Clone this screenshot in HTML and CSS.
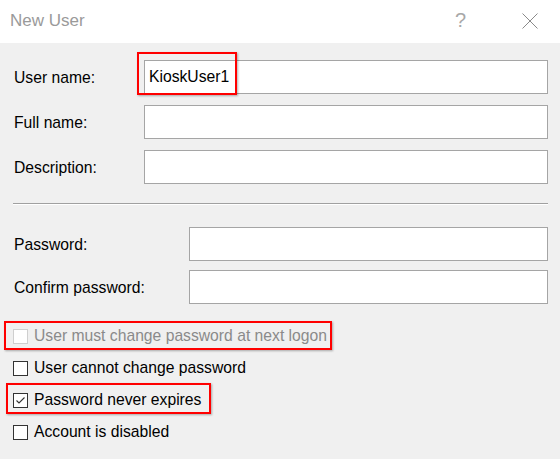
FILE: index.html
```html
<!DOCTYPE html>
<html lang="en">
<head>
<meta charset="utf-8">
<title>New User</title>
<link rel="stylesheet" href="styles.css">
</head>
<body>
<div class="dialog">
  <div class="titlebar">
    <span class="title">New User</span>
    <div class="title-buttons">
      <span class="help">?</span>
      <svg class="close" width="16" height="16" viewBox="0 0 16 16" aria-hidden="true">
        <path d="M0.5 0.5 L15.5 15.5 M15.5 0.5 L0.5 15.5" stroke="#8a8a8a" stroke-width="1" fill="none"/>
      </svg>
    </div>
  </div>
  <div class="content">
    <div class="grid grid-top">
      <label class="lbl">User name:</label>
      <div class="field hl-field"><div class="input">KioskUser1</div></div>
      <label class="lbl">Full name:</label>
      <div class="field"><div class="input"></div></div>
      <label class="lbl">Description:</label>
      <div class="field"><div class="input"></div></div>
    </div>
    <div class="separator"></div>
    <div class="grid grid-pw">
      <label class="lbl">Password:</label>
      <div class="field"><div class="input"></div></div>
      <label class="lbl">Confirm password:</label>
      <div class="field"><div class="input"></div></div>
    </div>
    <div class="checks">
      <div class="check disabled hl-a">
        <span class="box"></span><span class="ctext">User must change password at next logon</span>
      </div>
      <div class="check">
        <span class="box"></span><span class="ctext">User cannot change password</span>
      </div>
      <div class="check hl-b">
        <span class="box"><svg width="13" height="13" viewBox="0 0 13 13" aria-hidden="true"><path d="M2.5 6.5 L5 9 L10.5 3.5" stroke="#333" stroke-width="1.1" fill="none"/></svg></span><span class="ctext">Password never expires</span>
      </div>
      <div class="check">
        <span class="box"></span><span class="ctext">Account is disabled</span>
      </div>
    </div>
  </div>
</div>
</body>
</html>
```
FILE: styles.css
```css
html, body {
  margin: 0;
  padding: 0;
}
body {
  width: 560px;
  height: 459px;
  overflow: hidden;
  background: #f0f0f0;
  font-family: "Liberation Sans", Arial, sans-serif;
  font-size: 15.7px;
  color: #000;
}
.dialog {
  width: 560px;
  height: 459px;
  background: #f0f0f0;
}
.titlebar {
  height: 43px;
  background: #fff;
  display: flex;
  align-items: center;
  justify-content: space-between;
  padding-left: 10px;
  box-sizing: border-box;
}
.title {
  font-size: 17px;
  color: #9a9a9a;
  margin-top: -1px;
}
.title-buttons {
  display: flex;
  align-items: center;
  margin-top: -2px;
}
.help {
  font-size: 20px;
  color: #a8a8a8;
  width: 9px;
  margin-right: 58px;
}
.close {
  display: block;
  margin-right: 22px;
}
.content {
  padding: 17px 12px 0 14px;
}
.grid {
  display: grid;
  align-items: center;
}
.grid-top {
  grid-template-columns: 130px 1fr;
  row-gap: 11px;
}
.grid-pw {
  grid-template-columns: 175px 1fr;
  row-gap: 9px;
  margin-top: 22px;
}
.lbl {
  display: block;
  margin-top: 1px;
}
.field {
  position: relative;
}
.input {
  height: 34px;
  box-sizing: border-box;
  border: 1px solid #a5a5a5;
  background: #fff;
  padding: 0 4px;
  display: flex;
  align-items: center;
}
.hl-field::after {
  content: "";
  position: absolute;
  left: -7px;
  top: -8px;
  width: 100px;
  height: 43px;
  box-sizing: border-box;
  border: 2px solid #f00;
  box-shadow: 1px 1px 2px rgba(0, 0, 0, 0.3);
  pointer-events: none;
}
.separator {
  margin: 19px 0 0 -1px;
  height: 0;
  border-top: 1px solid #a0a0a0;
  border-bottom: 1px solid #fff;
}
.checks {
  margin-top: 17px;
  margin-left: -1px;
}
.check {
  position: relative;
  display: flex;
  align-items: flex-start;
  width: max-content;
  height: 32px;
}
.box {
  width: 15px;
  height: 15px;
  box-sizing: border-box;
  border: 1px solid #333;
  background: #fff;
  margin-top: 8px;
  margin-right: 6px;
  display: block;
}
.box svg {
  display: block;
}
.ctext {
  line-height: 32px;
  margin-top: -1px;
}
.disabled .box {
  border-color: #cfcfcf;
}
.disabled .ctext {
  color: #8a8a8a;
}
.hl-a::after,
.hl-b::after {
  content: "";
  position: absolute;
  box-sizing: border-box;
  border: 2px solid #f00;
  box-shadow: 1px 1px 2px rgba(0, 0, 0, 0.3);
  pointer-events: none;
}
.hl-a::after {
  left: -9px;
  right: -5px;
  top: 0;
  height: 29px;
}
.hl-b::after {
  left: -7px;
  right: -10px;
  top: -2px;
  height: 31px;
}
```
